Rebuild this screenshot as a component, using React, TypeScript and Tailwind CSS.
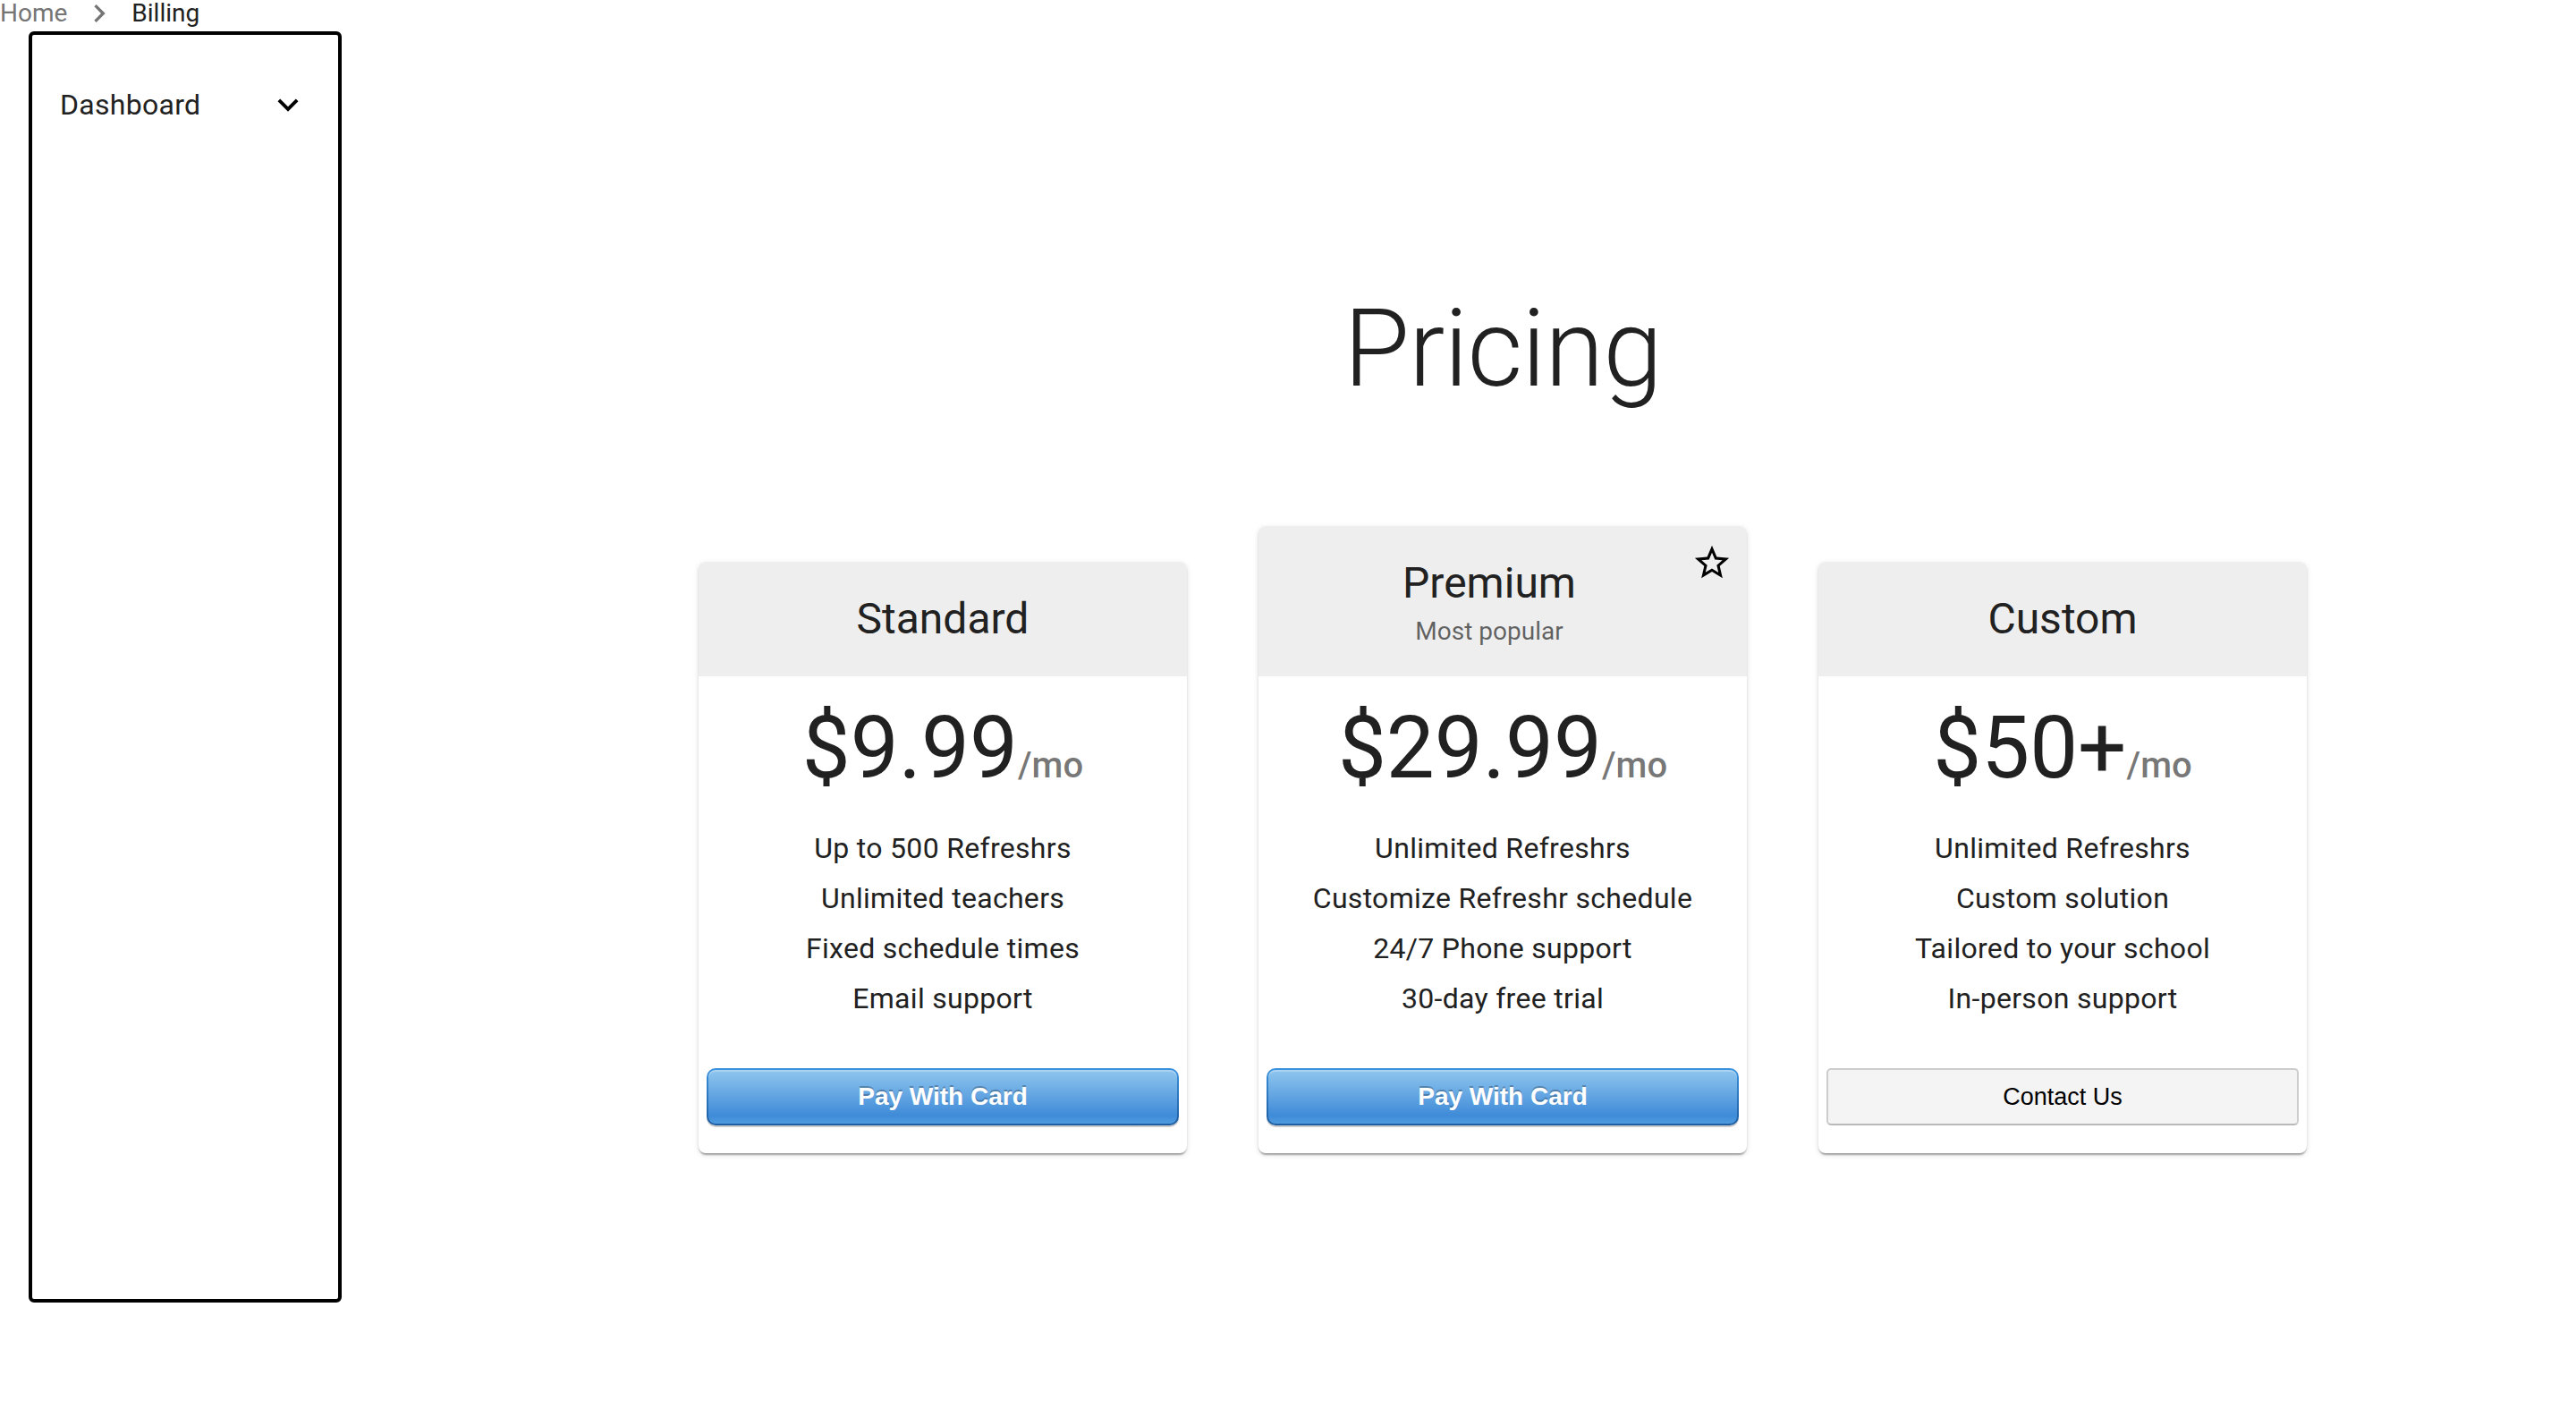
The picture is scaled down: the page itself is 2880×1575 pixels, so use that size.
import React from "react";

const tiers = [
  {
    title: "Standard",
    price: "$9.99",
    features: ["Up to 500 Refreshrs", "Unlimited teachers", "Fixed schedule times", "Email support"],
    action: "card",
  },
  {
    title: "Premium",
    subheader: "Most popular",
    price: "$29.99",
    features: ["Unlimited Refreshrs", "Customize Refreshr schedule", "24/7 Phone support", "30-day free trial"],
    action: "card",
    starred: true,
  },
  {
    title: "Custom",
    price: "$50+",
    features: ["Unlimited Refreshrs", "Custom solution", "Tailored to your school", "In-person support"],
    action: "contact",
  },
];

const roboto = { fontFamily: "Roboto, 'Liberation Sans', sans-serif" };

const StarBorder = () => (
  <svg viewBox="0 0 24 24" className="h-[46px] w-[46px] fill-black">
    <path d="M22 9.24l-7.19-.62L12 2 9.19 8.63 2 9.24l5.46 4.73L5.82 21 12 17.27 18.18 21l-1.63-7.03L22 9.24zM12 15.4l-3.76 2.27 1-4.28-3.32-2.88 4.38-.38L12 6.1l1.71 4.04 4.38.38-3.32 2.88 1 4.28L12 15.4z" />
  </svg>
);

const ExpandMore = () => (
  <svg viewBox="0 0 24 24" className="h-[46px] w-[46px] fill-black">
    <path d="M16.59 8.59 12 13.17 7.41 8.59 6 10l6 6 6-6z" />
  </svg>
);

const NavigateNext = () => (
  <svg viewBox="0 0 24 24" className="mx-[16px] h-[40px] w-[40px] shrink-0 fill-[#757575]">
    <path d="M10 6 8.59 7.41 13.17 12l-4.58 4.59L10 18l6-6z" />
  </svg>
);

const PayButton = () => (
  <div className="rounded-[10px] bg-gradient-to-b from-[#3b92de] to-[#1d5c9f] p-[2px] shadow-[0_2px_0_rgba(0,0,0,0.2)]">
    <div
      className="flex h-[60px] items-center justify-center rounded-[8px] bg-gradient-to-b from-[#8fc6ee] via-[#3f8bd8] via-85% to-[#4f9be0] text-[28px] font-bold text-white shadow-[inset_0_2px_0_rgba(255,255,255,0.25)] [text-shadow:0_-2px_0_rgba(0,0,0,0.25)]"
      style={{ fontFamily: "'Liberation Sans', Arial, sans-serif" }}
    >
      Pay With Card
    </div>
  </div>
);

const ContactButton = () => (
  <div
    className="flex h-[64px] items-center justify-center rounded-[5px] border-2 border-[#cdcdcd] border-b-[#b9b9b9] bg-[#f4f4f4] text-[27px] text-black"
    style={{ fontFamily: "'Liberation Sans', Arial, sans-serif" }}
  >
    Contact Us
  </div>
);

function PricingCard({ tier }: { tier: (typeof tiers)[number] }) {
  return (
    <div className="w-[546px] overflow-hidden rounded-[8px] bg-white shadow-[0_4px_2px_-2px_rgba(0,0,0,0.2),0_2px_2px_0_rgba(0,0,0,0.14),0_2px_6px_0_rgba(0,0,0,0.12)]">
      <div className="flex items-start bg-[#eeeeee] p-[32px]">
        <div className="flex-1 text-center">
          <div className="text-[48px] leading-[64px] text-[#212121]">{tier.title}</div>
          {tier.subheader && (
            <div className="relative top-[2px] text-[28px] leading-[40px] text-black/60">{tier.subheader}</div>
          )}
        </div>
        {tier.starred && (
          <div className="mr-[-16px] mt-[-14px]">
            <StarBorder />
          </div>
        )}
      </div>
      <div className="px-[32px] pt-[32px] pb-[50px]">
        <div className="mb-[36px] flex items-baseline justify-center">
          <span className="text-[96px] leading-[96px] text-[#212121]">{tier.price}</span>
          <span className="text-[40px] font-medium leading-[40px] text-black/55">/mo</span>
        </div>
        <ul>
          {tier.features.map((line) => (
            <li key={line} className="text-center text-[32px] leading-[56px] tracking-[0.3px] text-[#212121]">
              {line}
            </li>
          ))}
        </ul>
      </div>
      <div className="px-[9px] pb-[31px]">
        {tier.action === "card" ? <PayButton /> : <ContactButton />}
      </div>
    </div>
  );
}

export default function App() {
  return (
    <div className="min-h-screen bg-white" style={roboto}>
      <nav className="flex h-[30px] items-center text-[28px] leading-[30px]">
        <span className="text-[#757575]">Home</span>
        <NavigateNext />
        <span className="text-[#212121]">Billing</span>
      </nav>

      <div className="mt-[5px] flex">
        <aside className="w-[480px] shrink-0">
          <div className="ml-[32px] h-[1421px] w-[350px] rounded-[6px] border-4 border-black">
            <div className="mt-[54px] flex h-[48px] items-center justify-between pl-[31px] pr-[33px]">
              <span className="text-[32px] leading-[48px] tracking-[0.3px] text-[#212121]">Dashboard</span>
              <ExpandMore />
            </div>
          </div>
        </aside>

        <main className="flex flex-1 flex-col items-center pt-[283px]">
          <h1 className="text-[120px] font-light leading-[144px] tracking-[-1px] text-[#212121]">Pricing</h1>
          <div className="mt-[126px] flex items-end gap-[80px]">
            {tiers.map((tier) => (
              <PricingCard key={tier.title} tier={tier} />
            ))}
          </div>
        </main>
      </div>
    </div>
  );
}
